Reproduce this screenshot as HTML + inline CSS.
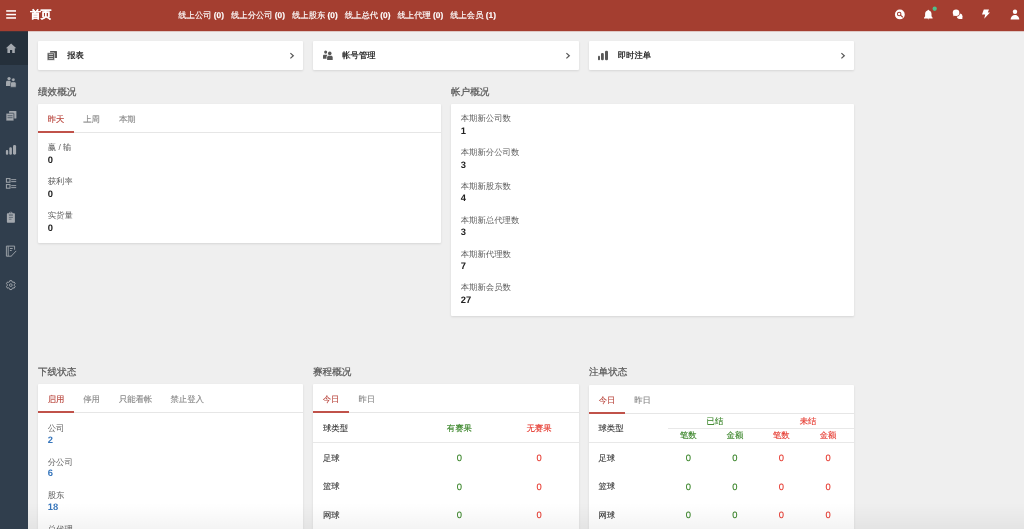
<!DOCTYPE html>
<html><head><meta charset="utf-8">
<style>
*{box-sizing:border-box;margin:0;padding:0}
html,body{width:1024px;height:529px;overflow:hidden}
body{position:relative;will-change:transform;text-rendering:geometricPrecision;background:#efefef;font-family:"Liberation Sans",sans-serif;color:#333;font-size:8.4px}
#hdr{position:absolute;left:0;top:0;width:1024px;height:31px;background:#a43e30}
#side{position:absolute;left:0;top:31px;width:28px;height:498px;background:#303e4d}
#side .act{position:absolute;left:0;top:0;width:28px;height:34px;background:#25303b}
.t{position:absolute;white-space:nowrap;line-height:1}
.card{position:absolute;background:#fff;border-radius:1px;box-shadow:0 1px 2.5px rgba(0,0,0,.11)}
.lbl{position:absolute;white-space:nowrap;line-height:1;font-size:9.6px;color:#555;-webkit-text-stroke:0.2px #555}
.tabs{position:absolute;left:0;top:0;right:0;height:29px;border-bottom:1px solid #e6e6e6}
.tab{position:absolute;top:0;height:28px;color:#888;font-size:8.4px;line-height:1;-webkit-text-stroke:0.12px currentColor}
.tab span{position:absolute;top:10.6px;left:9.7px;white-space:nowrap}
.tab.on{color:#b8433a}
.tab.on:after{content:"";position:absolute;left:0;right:0;bottom:-1px;height:2px;background:#c0524a}
.il{position:absolute;left:9.7px;color:#606060;font-size:8.4px;line-height:1;white-space:nowrap}
.iv{position:absolute;left:9.7px;margin-top:-1px;color:#222;font-size:9.4px;font-weight:bold;line-height:1;white-space:nowrap}
.iv.b{color:#3776bc}
.g{color:#338022}.r{color:#e5352b}
#hs{position:absolute;left:178.3px;top:10.7px;color:#fff;-webkit-text-stroke:0.15px #fff;font-size:8.3px;line-height:1;white-space:nowrap}
#hs span{margin-right:7.1px}
#hs b{font-weight:bold}
.lk{position:absolute;left:29.3px;top:10.2px;font-weight:bold;color:#333;font-size:8.3px;line-height:1;white-space:nowrap}
svg{position:absolute;overflow:visible}
.th{position:absolute;line-height:1;white-space:nowrap;font-size:8.4px;-webkit-text-stroke:0.1px currentColor}
.c{transform:translateX(-50%)}
.n{font-size:9.4px}
.hl{position:absolute;height:1px;background:#e8e8e8}
</style></head><body>
<div id="hdr">
  <svg style="left:0;top:0" width="30" height="31" viewBox="0 0 30 31">
    <rect x="6.2" y="10" width="9.8" height="1.9" fill="#f1dcd9"/>
    <rect x="6.2" y="13.8" width="9.8" height="1.5" fill="#fff"/>
    <rect x="6.2" y="17" width="9.8" height="1.9" fill="#f1dcd9"/>
  </svg>
  <div class="t" style="left:30.2px;top:10.3px;font-size:10.6px;font-weight:bold;color:#fff;-webkit-text-stroke:0.25px #fff">首页</div>
  <div id="hs"><span>线上公司 <b>(0)</b></span><span>线上分公司 <b>(0)</b></span><span>线上股东 <b>(0)</b></span><span>线上总代 <b>(0)</b></span><span>线上代理 <b>(0)</b></span><span>线上会员 <b>(1)</b></span></div>
  <!-- search -->
  <svg style="left:0;top:0" width="1024" height="31" viewBox="0 0 1024 31">
    <circle cx="899.85" cy="14.45" r="4.9" fill="#fff"/>
    <circle cx="899.2" cy="13.9" r="1.75" fill="none" stroke="#a43e30" stroke-width="1.05"/>
    <line x1="900.5" y1="15.2" x2="902.5" y2="17" stroke="#a43e30" stroke-width="1.1" stroke-linecap="round"/>
    <!-- bell -->
    <path d="M928.3 9.7c-0.45 0-0.75 0.35-0.75 0.75-1.6 0.45-2.45 1.8-2.45 3.5v2.3l-1.1 1.6v0.6h8.6v-0.6l-1.1-1.6v-2.3c0-1.7-0.85-3.05-2.45-3.5 0-0.4-0.3-0.75-0.75-0.75z" fill="#fff"/>
    <path d="M927.4 18.6h1.8l-0.9 0.9z" fill="#fff"/>
    <circle cx="934.7" cy="8.75" r="2.15" fill="#4fbf8a"/>
    <!-- chat -->
    <circle cx="959.6" cy="16.2" r="2.75" fill="#fff"/>
    <path d="M959.6 16.2h2.75v2.8h-2.75z" fill="#fff"/>
    <circle cx="956.05" cy="12.8" r="3.95" fill="#a43e30"/>
    <circle cx="956.05" cy="12.8" r="3.3" fill="#fff"/>
    <path d="M953.9 14.8l-0.9 1.5 1.8-0.6z" fill="#fff"/>
    <!-- bolt -->
    <path d="M983.8 9.6h5.2l-1.2 2.8h2.2l-5.8 6.3 1-4.1h-3.2z" fill="#fff"/>
    <!-- user -->
    <circle cx="1015" cy="11.7" r="2.2" fill="#fff"/>
    <path d="M1010.6 19.5c0-2.6 2-4.5 4.35-4.5s4.35 1.9 4.35 4.5z" fill="#fff"/>
  </svg>
</div>
<div id="side"><div class="act"></div></div>
<div style="position:absolute;left:0;top:31px;width:1024px;height:1px;background:rgba(164,62,48,.22)"></div>
<div id="side2" style="position:absolute;left:0;top:31px;width:28px;height:300px">
  <svg style="left:0;top:0" width="28" height="300" viewBox="0 31 28 300" fill="#a3a8ae">
    <!-- home -->
    <path d="M11.1 43.4l-5.2 4.9h1.5v4.7h2.6v-3.1h2.2v3.1h2.6v-4.7h1.5z"/>
    <!-- users -->
    <circle cx="9.05" cy="78.6" r="1.65"/>
    <path d="M6 86.1v-3.9c0-.8.6-1.4 1.4-1.4h2c.8 0 1.4.6 1.4 1.4v3.9z"/>
    <circle cx="13.3" cy="79.85" r="1.75" stroke="#303e4d" stroke-width="0.5"/>
    <path d="M10.5 87.2v-3.7c0-.9.7-1.6 1.6-1.6h2.4c.9 0 1.6.7 1.6 1.6v3.7z" stroke="#303e4d" stroke-width="0.5"/>
    <!-- reports -->
    <rect x="9" y="111" width="7.4" height="7.6" rx="0.6"/>
    <rect x="6" y="113.2" width="7.9" height="7.7" rx="0.6" stroke="#303e4d" stroke-width="0.7"/>
    <g fill="#303e4d" opacity="0.75"><rect x="7.5" y="115.3" width="5" height="0.9"/><rect x="7.5" y="117.3" width="5" height="0.9"/></g>
    <!-- bars -->
    <rect x="5.9" y="150" width="2.3" height="4.7" rx="1"/>
    <rect x="9.3" y="147.3" width="2.6" height="7.4" rx="1.2"/>
    <rect x="13" y="145" width="3.1" height="9.7" rx="1.4"/>
    <!-- list -->
    <g fill="none" stroke="#a3a8ae" stroke-width="1">
      <rect x="6.4" y="178.6" width="3.6" height="3.6"/>
      <rect x="6.4" y="184.6" width="3.6" height="3.6"/>
    </g>
    <rect x="11.2" y="179.2" width="5" height="0.9"/><rect x="11.2" y="181.2" width="5" height="0.9"/>
    <rect x="11.2" y="185.2" width="5" height="0.9"/><rect x="11.2" y="187.2" width="5" height="0.9"/>
    <!-- clipboard -->
    <path d="M7.6 213.2h1.5a1.8 1.8 0 0 1 3.5 0h1.6c.4 0 .7.3.7.7v8.1c0 .4-.3.7-.7.7H7.6c-.4 0-.7-.3-.7-.7v-8.1c0-.4.3-.7.7-.7z"/>
    <circle cx="10.85" cy="212.7" r="0.6" fill="#303e4d"/>
    <path d="M8.8 213.9h4.1v0.8h-4.1z" fill="#303e4d" opacity="0.5"/>
    <g fill="#303e4d" opacity="0.7"><rect x="8.9" y="215.4" width="4" height="0.7"/><rect x="8.9" y="217.1" width="4" height="0.7"/><rect x="8.9" y="218.8" width="2.6" height="0.7"/></g>
    <!-- form edit -->
    <g fill="none" stroke="#a3a8ae" stroke-width="0.9" transform="translate(0,-0.8)">
      <path d="M14.6 250.5v-3.6H6.4v10.1h5.2"/>
      <path d="M8.2 247v10"/>
      <path d="M9.9 249.3h2.8M9.9 251.3h1.8"/>
      <path d="M11.3 256.9l4.9-5.2"/>
    </g>
    <!-- gear -->
    <path fill="none" stroke="#a3a8ae" stroke-width="1" stroke-linejoin="round" d="M9.47 281.81 L9.85 280.65 L11.75 280.65 L12.13 281.81 L12.99 282.30 L14.18 282.06 L15.13 283.69 L14.32 284.61 L14.32 285.59 L15.13 286.51 L14.18 288.14 L12.99 287.90 L12.13 288.39 L11.75 289.55 L9.85 289.55 L9.47 288.39 L8.61 287.90 L7.42 288.14 L6.47 286.51 L7.28 285.59 L7.28 284.61 L6.47 283.69 L7.42 282.06 L8.61 282.30Z"/>
    <circle cx="10.8" cy="285.1" r="1.35" fill="none" stroke="#a3a8ae" stroke-width="0.9"/>
  </svg>
</div>

<!-- link cards -->
<div class="card" style="left:38px;top:41px;width:265px;height:29px">
  <svg style="left:0;top:0" width="30" height="29" viewBox="38 41 30 29" fill="#585858">
    <rect x="50" y="50.9" width="7" height="7" rx="0.5"/>
    <rect x="47.2" y="52.8" width="7.4" height="7.5" rx="0.6" stroke="#fff" stroke-width="0.6"/>
    <g fill="#d8d8d8"><rect x="48.8" y="54" width="4.3" height="0.8"/><rect x="48.8" y="56" width="4.3" height="0.8"/><rect x="48.8" y="58" width="4.3" height="0.8"/></g>
  </svg>
  <div class="lk">报表</div>
  <svg style="left:250px;top:11px" width="8" height="8" viewBox="0 0 8 8"><path d="M2.4 1.1l2.9 2.6-2.9 2.7" fill="none" stroke="#5a5a5a" stroke-width="1.25"/></svg>
</div>
<div class="card" style="left:313px;top:41px;width:266px;height:29px">
  <svg style="left:0;top:0" width="30" height="29" viewBox="313 41 30 29" fill="#585858">
    <circle cx="325.65" cy="52.1" r="1.55"/>
    <path d="M323 58.8v-3c0-.6.5-1.1 1.1-1.1h2.6c.3 0 .5.1.7.2-.6.5-.9 1.2-.9 2v1.9z"/>
    <circle cx="329.75" cy="53.4" r="1.8"/>
    <path d="M327.1 60v-2.6c0-1 .8-1.6 1.7-1.6h2.2c.9 0 1.7.7 1.7 1.6v2.6z"/>
  </svg>
  <div class="lk">帐号管理</div>
  <svg style="left:251px;top:11px" width="8" height="8" viewBox="0 0 8 8"><path d="M2.4 1.1l2.9 2.6-2.9 2.7" fill="none" stroke="#5a5a5a" stroke-width="1.25"/></svg>
</div>
<div class="card" style="left:589px;top:41px;width:265px;height:29px">
  <svg style="left:0;top:0" width="30" height="29" viewBox="589 41 30 29" fill="#585858">
    <rect x="598" y="55.8" width="2" height="4.4" rx="0.9"/>
    <rect x="601" y="52.9" width="2.8" height="7.3" rx="1.2"/>
    <rect x="605" y="50.8" width="3" height="9.4" rx="1.3"/>
  </svg>
  <div class="lk" style="left:28.8px">即时注单</div>
  <svg style="left:250px;top:11px" width="8" height="8" viewBox="0 0 8 8"><path d="M2.4 1.1l2.9 2.6-2.9 2.7" fill="none" stroke="#5a5a5a" stroke-width="1.25"/></svg>
</div>

<div class="lbl" style="left:38px;top:87.9px">绩效概况</div>
<div class="card" style="left:38px;top:104px;width:403px;height:139px">
  <div class="tabs">
    <div class="tab on" style="left:0;width:35.5px"><span>昨天</span></div>
    <div class="tab" style="left:35.5px;width:35.8px"><span>上周</span></div>
    <div class="tab" style="left:71.3px;width:35.8px"><span>本期</span></div>
  </div>
  <div class="il" style="top:39.4px">赢 / 输</div><div class="iv" style="top:51.9px">0</div>
  <div class="il" style="top:73.2px">获利率</div><div class="iv" style="top:85.7px">0</div>
  <div class="il" style="top:107px">实货量</div><div class="iv" style="top:119.5px">0</div>
</div>

<div class="lbl" style="left:451px;top:87.9px">帐户概况</div>
<div class="card" style="left:451px;top:104px;width:403px;height:212px">
  <div class="il" style="top:10.3px">本期新公司数</div><div class="iv" style="top:22.7px">1</div>
  <div class="il" style="top:44.1px">本期新分公司数</div><div class="iv" style="top:56.5px">3</div>
  <div class="il" style="top:77.9px">本期新股东数</div><div class="iv" style="top:90.3px">4</div>
  <div class="il" style="top:111.7px">本期新总代理数</div><div class="iv" style="top:124.1px">3</div>
  <div class="il" style="top:145.5px">本期新代理数</div><div class="iv" style="top:157.9px">7</div>
  <div class="il" style="top:179.3px">本期新会员数</div><div class="iv" style="top:191.7px">27</div>
</div>

<div class="lbl" style="left:38px;top:368.1px">下线状态</div>
<div class="card" style="left:38px;top:384px;width:265px;height:160px">
  <div class="tabs">
    <div class="tab on" style="left:0;width:35.5px"><span>启用</span></div>
    <div class="tab" style="left:35.5px;width:35.8px"><span>停用</span></div>
    <div class="tab" style="left:71.3px;width:52.5px"><span>只能看帐</span></div>
    <div class="tab" style="left:122.8px;width:52.5px"><span>禁止登入</span></div>
  </div>
  <div class="il" style="top:40px">公司</div><div class="iv b" style="top:51.8px">2</div>
  <div class="il" style="top:73.6px">分公司</div><div class="iv b" style="top:85.4px">6</div>
  <div class="il" style="top:107.3px">股东</div><div class="iv b" style="top:119.4px">18</div>
  <div class="il" style="top:140.8px">总代理</div>
</div>

<div class="lbl" style="left:313px;top:368.1px">赛程概况</div>
<div class="card" style="left:313px;top:384px;width:266px;height:160px">
  <div class="tabs">
    <div class="tab on" style="left:0;width:35.8px"><span>今日</span></div>
    <div class="tab" style="left:35.8px;width:35.8px"><span>昨日</span></div>
  </div>
  <div class="th" style="left:9.9px;top:39.6px;color:#333">球类型</div>
  <div class="th g c" style="left:146.4px;top:39.6px">有赛果</div>
  <div class="th r c" style="left:226px;top:39.6px">无赛果</div>
  <div class="hl" style="left:0;right:0;top:58px"></div>
  <div class="th" style="left:9.9px;top:69.6px;color:#333">足球</div>
  <div class="th g c n" style="left:146.4px;top:69.1px">0</div>
  <div class="th r c n" style="left:226px;top:69.1px">0</div>
  <div class="th" style="left:9.9px;top:98.2px;color:#333">篮球</div>
  <div class="th g c n" style="left:146.4px;top:97.7px">0</div>
  <div class="th r c n" style="left:226px;top:97.7px">0</div>
  <div class="th" style="left:9.9px;top:126.8px;color:#333">网球</div>
  <div class="th g c n" style="left:146.4px;top:126.3px">0</div>
  <div class="th r c n" style="left:226px;top:126.3px">0</div>
</div>

<div class="lbl" style="left:589px;top:368.1px">注单状态</div>
<div class="card" style="left:589px;top:385px;width:265px;height:160px">
  <div class="tabs">
    <div class="tab on" style="left:0;width:35.5px"><span>今日</span></div>
    <div class="tab" style="left:35.5px;width:35.8px"><span>昨日</span></div>
  </div>
  <div class="th" style="left:9.4px;top:39.3px;color:#333">球类型</div>
  <div class="th g c" style="left:125.9px;top:32.4px">已结</div>
  <div class="th r c" style="left:219px;top:32.4px">未结</div>
  <div class="hl" style="left:79px;right:0;top:43.0px"></div>
  <div class="th g c" style="left:99.3px;top:46.4px">笔数</div>
  <div class="th g c" style="left:145.9px;top:46.4px">金额</div>
  <div class="th r c" style="left:192.3px;top:46.4px">笔数</div>
  <div class="th r c" style="left:239px;top:46.4px">金额</div>
  <div class="hl" style="left:0;right:0;top:57.0px"></div>
  <div class="th" style="left:9.4px;top:68.6px;color:#333">足球</div>
  <div class="th g c n" style="left:99.3px;top:68.1px">0</div><div class="th g c n" style="left:145.9px;top:68.1px">0</div>
  <div class="th r c n" style="left:192.3px;top:68.1px">0</div><div class="th r c n" style="left:239px;top:68.1px">0</div>
  <div class="th" style="left:9.4px;top:97.2px;color:#333">篮球</div>
  <div class="th g c n" style="left:99.3px;top:96.7px">0</div><div class="th g c n" style="left:145.9px;top:96.7px">0</div>
  <div class="th r c n" style="left:192.3px;top:96.7px">0</div><div class="th r c n" style="left:239px;top:96.7px">0</div>
  <div class="th" style="left:9.4px;top:125.8px;color:#333">网球</div>
  <div class="th g c n" style="left:99.3px;top:125.3px">0</div><div class="th g c n" style="left:145.9px;top:125.3px">0</div>
  <div class="th r c n" style="left:192.3px;top:125.3px">0</div><div class="th r c n" style="left:239px;top:125.3px">0</div>
</div>
<div style="position:absolute;left:28px;right:0;bottom:0;height:26px;background:linear-gradient(rgba(0,0,0,0),rgba(0,0,0,.045))"></div>
</body></html>
